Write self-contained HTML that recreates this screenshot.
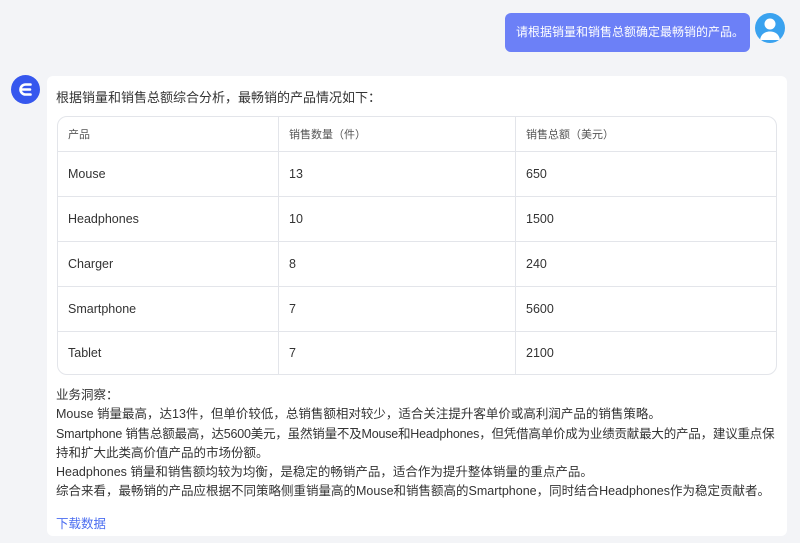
<!DOCTYPE html>
<html><head><meta charset="utf-8"><style>
*{margin:0;padding:0;box-sizing:border-box}
body{width:800px;height:543px;background:#f3f4f7;font-family:"Liberation Sans","Noto Sans CJK SC",sans-serif;color:#333;position:relative;overflow:hidden}
.bubble{position:absolute;left:505px;top:13px;width:245px;height:39px;background:#6c80f7;border-radius:6px;color:#fff;font-size:12px;line-height:39px;padding-left:11px;white-space:nowrap}
.av{position:absolute;left:755px;top:13px;width:30px;height:30px;border-radius:50%;background:#3aa2ef;overflow:hidden}
.logo{position:absolute;left:11px;top:75px;width:29px;height:29px;border-radius:50%;background:#3657ee}
.card{position:absolute;left:47px;top:76px;width:740px;height:460px;background:#fff;border-radius:6px}
.intro{position:absolute;left:9px;top:11px;font-size:13px}
table{position:absolute;left:10px;top:40px;width:720px;border-collapse:separate;border-spacing:0;border:1px solid #e3e5ea;border-radius:10px;font-size:12.5px}
td{height:45px;padding-left:10px;border-bottom:1px solid #e3e5ea;border-right:1px solid #e3e5ea}
td:last-child{border-right:none}
tr:last-child td{border-bottom:none;height:42px}
tr.h td{height:35px;font-size:11px;color:#555}
.txt{position:absolute;left:9px;top:310px;font-size:12.5px;line-height:19.3px;width:735px;color:#333}
.txt div{white-space:nowrap}
.lnk{position:absolute;left:9px;top:437px;font-size:12.5px;color:#4a6cf0}
</style></head><body>
<div class="bubble">请根据销量和销售总额确定最畅销的产品。</div>
<div class="av"><svg width="30" height="30"><circle cx="15" cy="11" r="5.5" fill="#fff"/><path d="M5 27c1-6 5-8.5 10-8.5s9 2.5 10 8.5z" fill="#fff"/></svg></div>
<div class="logo"><svg width="29" height="29"><path d="M19.5 9.5h-5a5 5 0 0 0 0 10h5M10 14.5h9" stroke="#fff" stroke-width="2.6" fill="none" stroke-linecap="round"/></svg></div>
<div class="card">
<div class="intro">根据销量和销售总额综合分析，最畅销的产品情况如下：</div>
<table>
<tr class="h"><td style="width:221px">产品</td><td style="width:237px">销售数量（件）</td><td>销售总额（美元）</td></tr>
<tr><td>Mouse</td><td>13</td><td>650</td></tr>
<tr><td>Headphones</td><td>10</td><td>1500</td></tr>
<tr><td>Charger</td><td>8</td><td>240</td></tr>
<tr><td>Smartphone</td><td>7</td><td>5600</td></tr>
<tr><td>Tablet</td><td>7</td><td>2100</td></tr>
</table>
<div class="txt"><div>业务洞察：</div><div>Mouse 销量最高，达13件，但单价较低，总销售额相对较少，适合关注提升客单价或高利润产品的销售策略。</div><div style="letter-spacing:-0.2px">Smartphone 销售总额最高，达5600美元，虽然销量不及Mouse和Headphones，但凭借高单价成为业绩贡献最大的产品，建议重点保</div><div>持和扩大此类高价值产品的市场份额。</div><div>Headphones 销量和销售额均较为均衡，是稳定的畅销产品，适合作为提升整体销量的重点产品。</div><div>综合来看，最畅销的产品应根据不同策略侧重销量高的Mouse和销售额高的Smartphone，同时结合Headphones作为稳定贡献者。</div></div>
<div class="lnk">下载数据</div>
</div>
</body></html>
